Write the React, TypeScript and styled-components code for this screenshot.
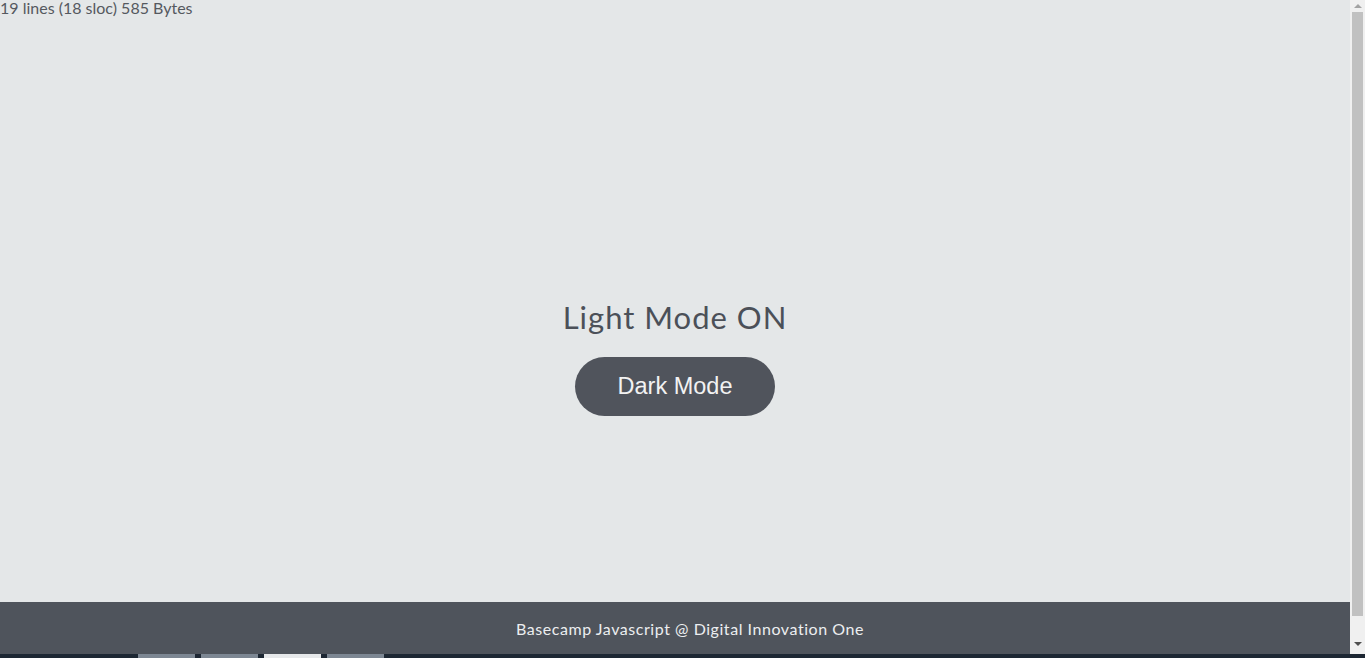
import styled, { createGlobalStyle } from "styled-components";
import { useState } from "react";

const GlobalStyle = createGlobalStyle`
    body {
        margin: 0;
        background: #e4e7e8;
        font-family: Lato, "Noto Sans", sans-serif;
        overflow: hidden;
    }
`;

const App = () => {
    const [dark, setDark] = useState<boolean>(false);

    return (
        <Window>
            <GlobalStyle />
            <Screen>
                <Page>
                    <FileInfo>19 lines (18 sloc) 585 Bytes</FileInfo>
                    <Main>
                        <Title>{dark ? "Dark Mode ON" : "Light Mode ON"}</Title>
                        <ToggleButton onClick={() => setDark(!dark)}>
                            {dark ? "Light Mode" : "Dark Mode"}
                        </ToggleButton>
                    </Main>
                    <Footer>Basecamp Javascript @ Digital Innovation One</Footer>
                </Page>
                <Scrollbar>
                    <Arrow direction="up" />
                    <Thumb />
                    <Arrow direction="down" />
                </Scrollbar>
            </Screen>
            <Taskbar>
                <TaskButton width={57} />
                <TaskButton width={57} />
                <TaskButton width={57} light />
                <TaskButton width={57} />
            </Taskbar>
        </Window>
    );
};

const Window = styled.div`
    display: flex;
    flex-direction: column;
    height: 658px;
`;

const Screen = styled.div`
    flex: 1;
    display: flex;
    min-height: 0;
`;

const Page = styled.div`
    flex: 1;
    display: flex;
    flex-direction: column;
`;

const FileInfo = styled.div`
    height: 16px;
    font-size: 16px;
    line-height: 16px;
    color: #55595f;
`;

const Main = styled.main`
    flex: 1;
    display: flex;
    flex-direction: column;
    align-items: center;
    justify-content: center;
    gap: 21px;
    padding-top: 95px;
`;

const Title = styled.h1`
    margin: 0;
    font-size: 31px;
    font-weight: 400;
    line-height: 38px;
    color: #4b5058;
    letter-spacing: 1px;
`;

const ToggleButton = styled.button`
    width: 200px;
    height: 59px;
    border: none;
    border-radius: 30px;
    background: #50545c;
    color: #f2f2f2;
    font-family: "Liberation Sans", Arial, sans-serif;
    font-size: 23.5px;
    cursor: pointer;
`;

const Footer = styled.footer`
    height: 52px;
    display: flex;
    align-items: center;
    justify-content: center;
    padding-left: 30px;
    background: #4f545c;
    color: #eceef0;
    font-size: 16px;
    letter-spacing: 0.55px;
`;

const Scrollbar = styled.div`
    width: 15px;
    display: flex;
    flex-direction: column;
    align-items: center;
    background: #f0f0f0;
    padding: 4px 0 8px;
    gap: 5px;
`;

const Arrow = styled.div<{ direction: "up" | "down" }>`
    width: 0;
    height: 0;
    border-left: 4px solid transparent;
    border-right: 4px solid transparent;
    ${({ direction }) =>
        direction === "up"
            ? "border-bottom: 4px solid #a3a3a3;"
            : "border-top: 4px solid #505050;"}
`;

const Thumb = styled.div`
    flex: 1;
    width: 11px;
    margin-top: -1px;
    margin-bottom: 21px;
    background: #c1c1c1;
`;

const Taskbar = styled.div`
    height: 4px;
    display: flex;
    gap: 6px;
    padding-left: 138px;
    background: #1d2733;
`;

const TaskButton = styled.div<{ width: number; light?: boolean }>`
    width: ${({ width }) => width}px;
    background: ${({ light }) => (light ? "#e6e8ea" : "#7d8793")};
`;

export default App;
